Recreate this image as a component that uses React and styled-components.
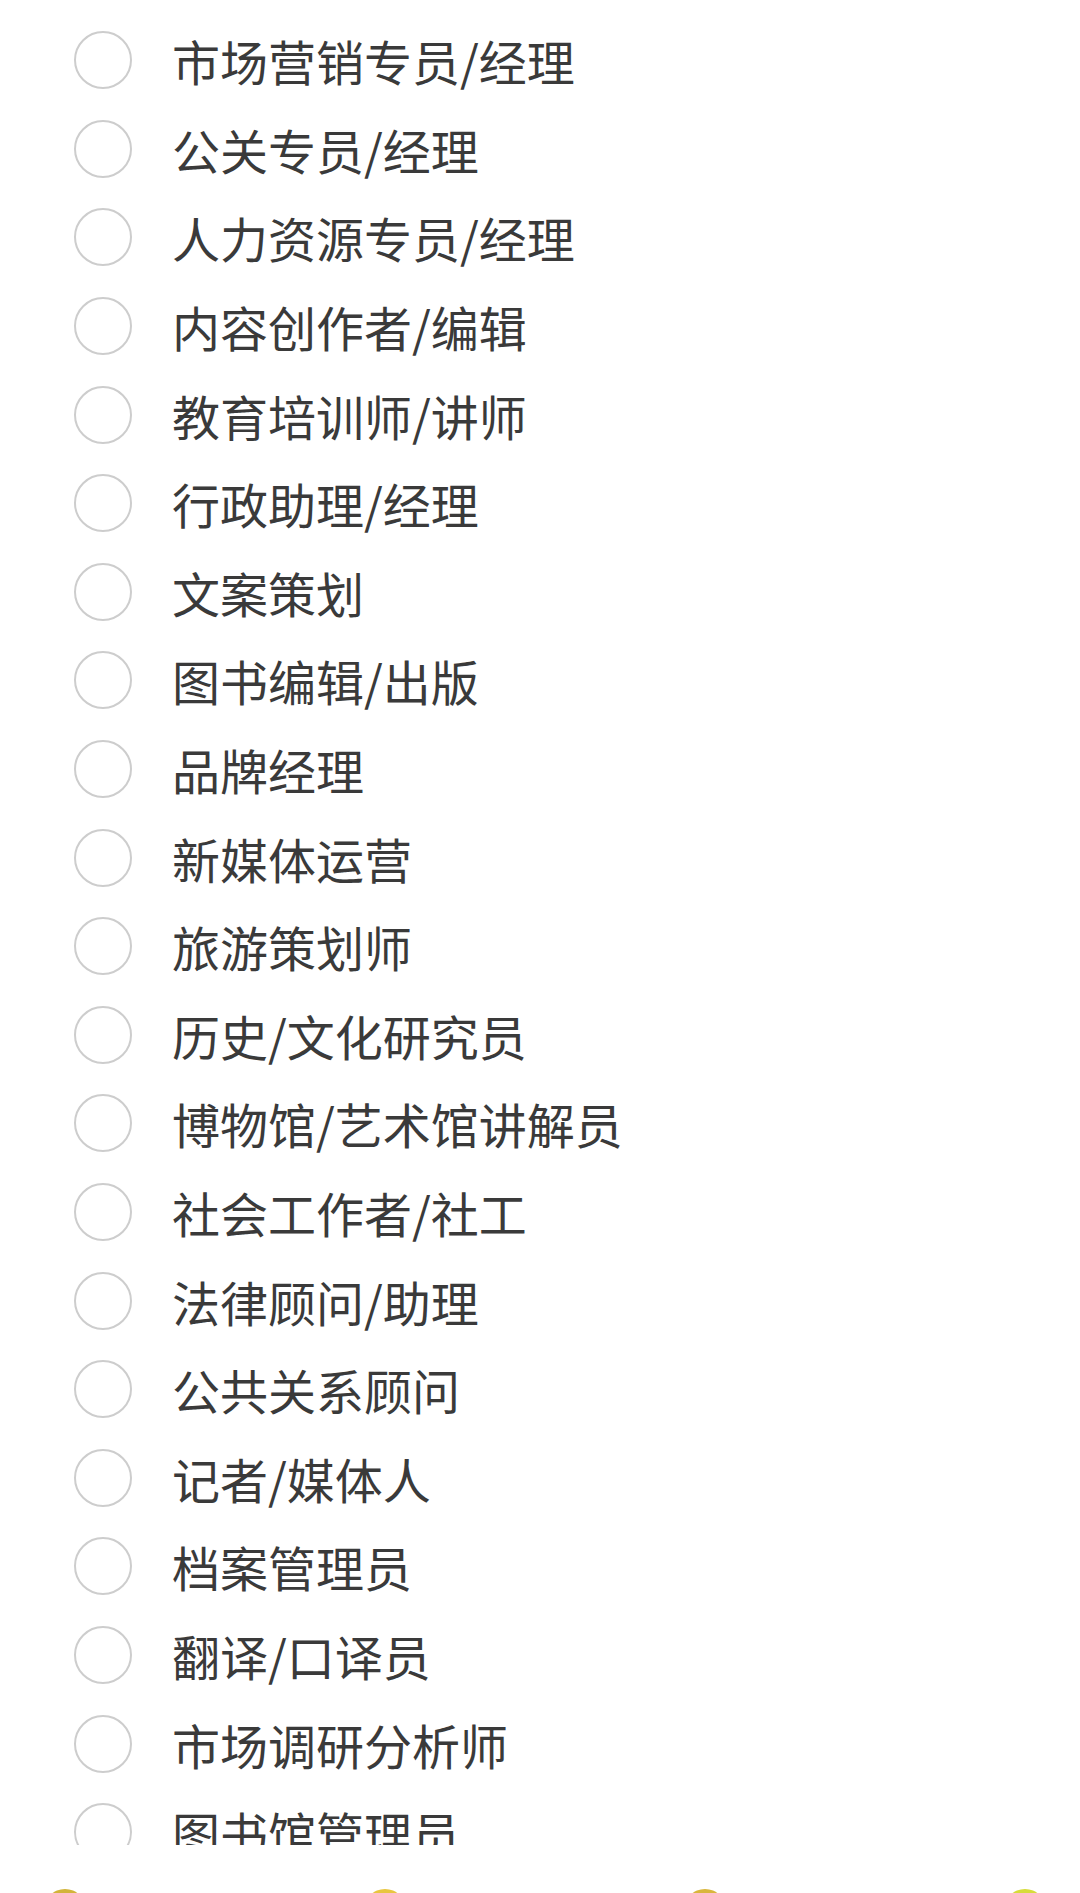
import React from 'react';
import styled, { createGlobalStyle } from 'styled-components';

const jobs = [
  '市场营销专员/经理',
  '公关专员/经理',
  '人力资源专员/经理',
  '内容创作者/编辑',
  '教育培训师/讲师',
  '行政助理/经理',
  '文案策划',
  '图书编辑/出版',
  '品牌经理',
  '新媒体运营',
  '旅游策划师',
  '历史/文化研究员',
  '博物馆/艺术馆讲解员',
  '社会工作者/社工',
  '法律顾问/助理',
  '公共关系顾问',
  '记者/媒体人',
  '档案管理员',
  '翻译/口译员',
  '市场调研分析师',
  '图书馆管理员',
];

const tabColors = ['#d2b43a', '#e8c640', '#d9b63c', '#d6dc3a'];

const GlobalStyle = createGlobalStyle`
  html, body {
    margin: 0;
    padding: 0;
    background: #ffffff;
  }
  body {
    font-family: "Noto Sans CJK SC", "Noto Sans", sans-serif;
  }
`;

const Page = styled.div`
  width: 1080px;
  height: 1893px;
  overflow: hidden;
  background: #fff;
  display: flex;
  flex-direction: column;
`;

const List = styled.div`
  flex: 0 0 1845px;
  height: 1845px;
  overflow: hidden;
  padding-top: 16px;
  box-sizing: border-box;
  display: flex;
  flex-direction: column;
`;

const Row = styled.label`
  flex: 0 0 88.6px;
  height: 88.6px;
  display: flex;
  align-items: center;
  padding-left: 74px;
  gap: 40px;
`;

const Radio = styled.span`
  flex: 0 0 auto;
  width: 58px;
  height: 58px;
  box-sizing: border-box;
  border-radius: 50%;
  border: 2.5px solid #cdcdcd;
  background: #fff;
`;

const Label = styled.span`
  font-size: 48px;
  line-height: 1;
  color: #3a3a3a;
  white-space: nowrap;
`;

const Footer = styled.div`
  flex: 1 1 auto;
  min-height: 0;
  overflow: hidden;
  display: flex;
  justify-content: space-between;
  align-items: flex-start;
  padding: 0 34px 0 44px;
`;

const TabIcon = styled.span`
  flex: 0 0 auto;
  width: 42px;
  height: 42px;
  margin-top: 44px;
  border-radius: 50%;
  background: ${(p) => p.$color};
`;

export default function App() {
  return (
    <Page>
      <GlobalStyle />
      <List>
        {jobs.map((job) => (
          <Row key={job}>
            <Radio />
            <Label>{job}</Label>
          </Row>
        ))}
      </List>
      <Footer>
        {tabColors.map((c, i) => (
          <TabIcon key={i} $color={c} />
        ))}
      </Footer>
    </Page>
  );
}
